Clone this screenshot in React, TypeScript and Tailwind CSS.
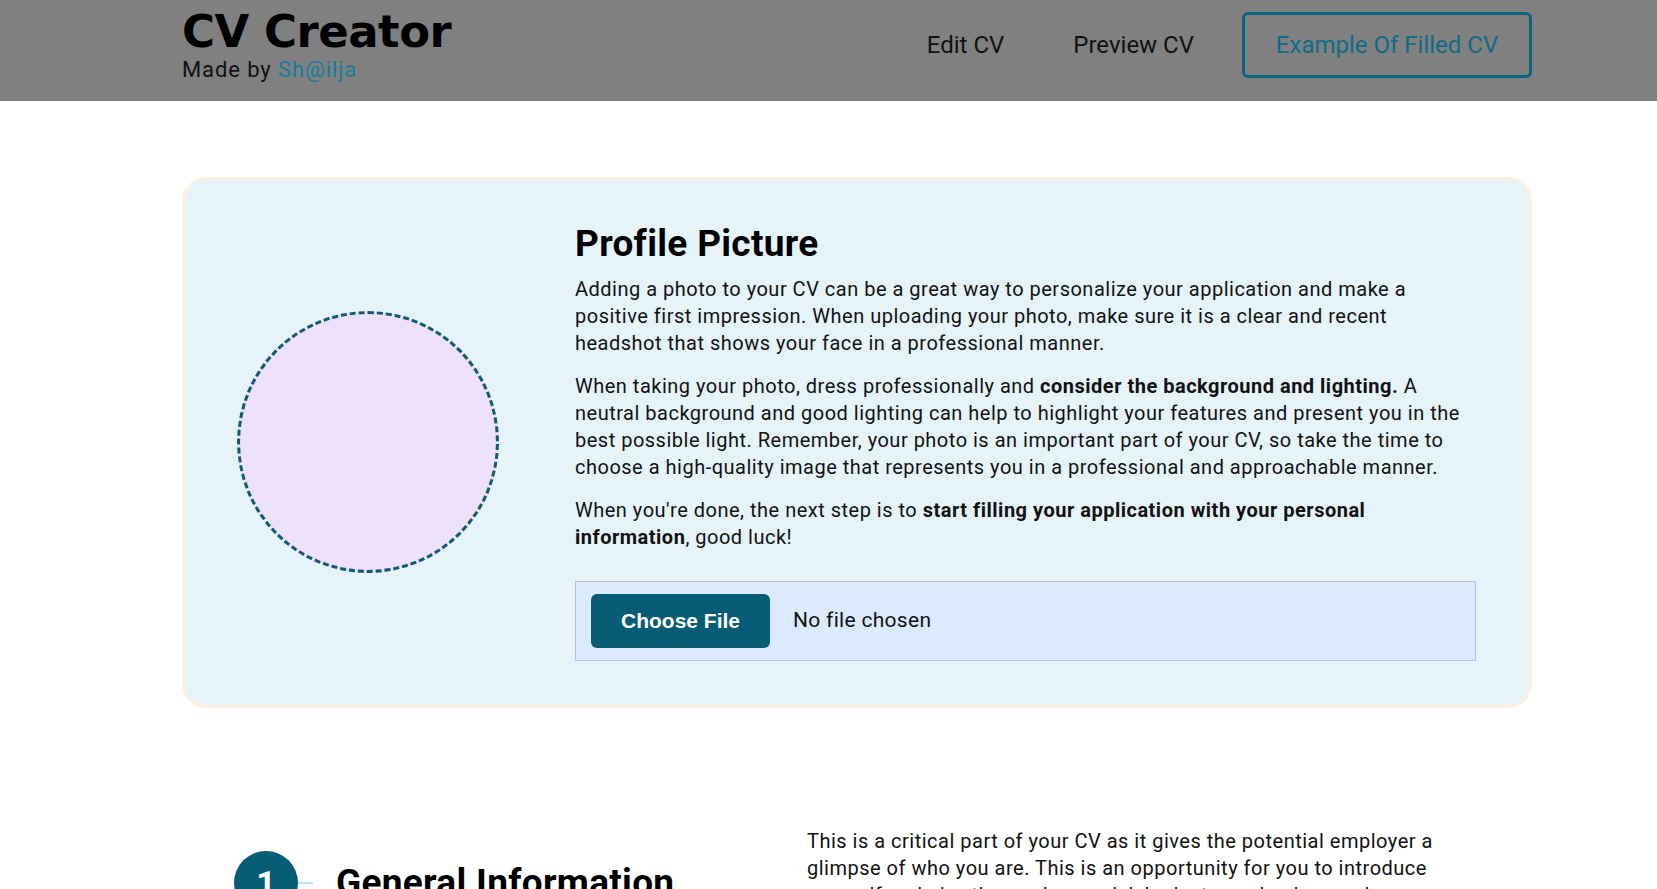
import { useState } from "react";

export default function App() {
  const [fileName, setFileName] = useState<string | null>(null);

  return (
    <div className="min-h-screen bg-white text-[#111] font-['Roboto',sans-serif]">
      <header className="h-[101px] bg-[#808080]">
        <div className="ml-[182px] w-[1350px] flex items-start justify-between">
          <div className="pt-[10px]">
            <h1 className="font-['DejaVu_Sans',sans-serif] font-bold text-[45px] leading-[44px] text-black tracking-[-0.5px]">
              CV Creator
            </h1>
            <p className="mt-[4px] text-[22px] leading-[24px] tracking-[0.9px] text-[#111]">
              Made by <span className="text-[#177c9c]">Sh@ilja</span>
            </p>
          </div>
          <nav className="mt-[12px] h-[66px] flex items-center">
            <a href="#" className="text-[24px] text-[#111] mr-[69px]">
              Edit CV
            </a>
            <a href="#" className="text-[24px] text-[#111] mr-[48px]">
              Preview CV
            </a>
            <a
              href="#"
              className="h-[66px] w-[290px] flex items-center justify-center border-[3px] border-[#0b6380] rounded-md text-[24px] text-[#0e6a86]"
            >
              Example Of Filled CV
            </a>
          </nav>
        </div>
      </header>

      <main className="ml-[182px] w-[1350px]">
        <section className="mt-[76px] flex items-center bg-[#e6f4f9] border-[3px] border-[#fff0e4] rounded-3xl pl-[52px] pr-[53px] pt-[42px] pb-[44px]">
          <div className="w-[262px] h-[262px] shrink-0 rounded-full bg-[#ede1fb] border-[3px] border-dashed border-[#0f5b73]" />
          <div className="ml-[76px] flex-1">
            <h2 className="text-[37px] leading-[43px] font-bold tracking-[0.3px] text-black mb-[11px]">
              Profile Picture
            </h2>
            <div className="text-[20px] leading-[27px] tracking-[0.5px] text-[#111] flex flex-col gap-[16px]">
              <p>
                Adding a photo to your CV can be a great way to personalize your application and make a
                positive first impression. When uploading your photo, make sure it is a clear and recent
                headshot that shows your face in a professional manner.
              </p>
              <p>
                When taking your photo, dress professionally and{" "}
                <strong className="font-bold">consider the background and lighting.</strong> A neutral
                background and good lighting can help to highlight your features and present you in the
                best possible light. Remember, your photo is an important part of your CV, so take the
                time to choose a high-quality image that represents you in a professional and
                approachable manner.
              </p>
              <p>
                When you're done, the next step is to{" "}
                <strong className="font-bold">
                  start filling your application with your personal information
                </strong>
                , good luck!
              </p>
            </div>
            <label className="mt-[30px] h-[80px] flex items-center bg-[#dbeafe] border border-[#c4b5fd] pl-[15px] cursor-pointer">
              <span className="w-[179px] h-[54px] flex items-center justify-center rounded-md bg-[#065b75] text-white font-['Liberation_Sans',sans-serif] font-bold text-[21px]">
                Choose File
              </span>
              <span className="ml-[23px] text-[21px] tracking-[0.3px] text-[#111]">
                {fileName ?? "No file chosen"}
              </span>
              <input
                type="file"
                className="hidden"
                onChange={(e) => setFileName(e.target.files?.[0]?.name ?? null)}
              />
            </label>
          </div>
        </section>

        <section className="mt-[120px] flex items-start">
          <div className="w-[625px] pl-[52px] pt-[23px] flex items-center">
            <div className="w-[64px] h-[64px] shrink-0 rounded-full bg-[#065b75] text-white flex items-center justify-center text-[34px] font-bold">
              1
            </div>
            <div className="w-[15px] h-[2px] bg-[#b8e4f0]" />
            <h2 className="ml-[23px] text-[37px] font-bold tracking-[0.3px] text-black">
              General Information
            </h2>
          </div>
          <p className="w-[640px] text-[20px] leading-[27px] tracking-[0.5px] text-[#111]">
            This is a critical part of your CV as it gives the potential employer a glimpse of who you
            are. This is an opportunity for you to introduce yourself and give the reader a quick look at
            your background, your skills and what you can bring to the role you are applying for.
          </p>
        </section>
      </main>
    </div>
  );
}
